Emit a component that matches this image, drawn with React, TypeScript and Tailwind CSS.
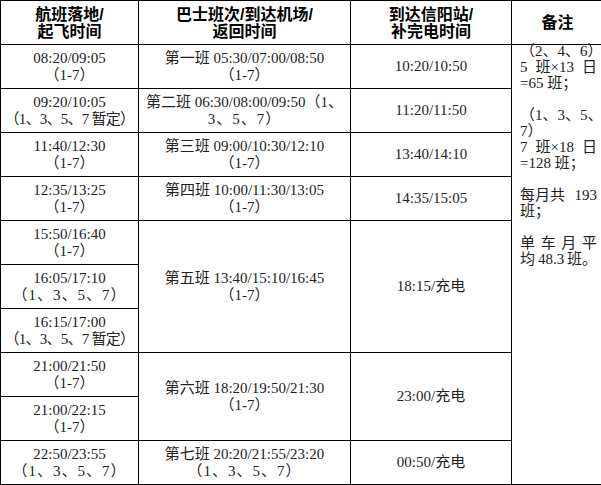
import React from 'react';

const flights = [
  { t: '08:20/09:05', d: '（1-7）' },
  { t: '09:20/10:05', d: '（1、3、5、7 暂定）', tight: 2 },
  { t: '11:40/12:30', d: '（1-7）' },
  { t: '12:35/13:25', d: '（1-7）' },
  { t: '15:50/16:40', d: '（1-7）' },
  { t: '16:05/17:10', d: '（1、3、5、7）', tight: 1 },
  { t: '16:15/17:00', d: '（1、3、5、7 暂定）', tight: 2 },
  { t: '21:00/21:50', d: '（1-7）' },
  { t: '21:00/22:15', d: '（1-7）' },
  { t: '22:50/23:55', d: '（1、3、5、7）', tight: 1 },
];

// bus column, with the row it starts on and how many rows it spans
const buses: Record<number, { span: number; a: string; b: string; c: string; wide?: boolean }> = {
  0: { span: 1, a: '第一班 05:30/07:00/08:50', b: '（1-7）', c: '10:20/10:50' },
  1: { span: 1, a: '第二班 06:30/08:00/09:50（1、', b: '3、5、7）', c: '11:20/11:50', wide: true },
  2: { span: 1, a: '第三班 09:00/10:30/12:10', b: '（1-7）', c: '13:40/14:10' },
  3: { span: 1, a: '第四班 10:00/11:30/13:05', b: '（1-7）', c: '14:35/15:05' },
  4: { span: 3, a: '第五班 13:40/15:10/16:45', b: '（1-7）', c: '18:15/充电' },
  7: { span: 2, a: '第六班 18:20/19:50/21:30', b: '（1-7）', c: '23:00/充电' },
  9: { span: 1, a: '第七班 20:20/21:55/23:20', b: '（1、3、5、7）', c: '00:50/充电', wide: true },
};

const Line = ({ parts }: { parts: string[] }) => (
  <div className="flex justify-between whitespace-nowrap">
    {parts.map((p, i) => (
      <span key={i}>{p}</span>
    ))}
  </div>
);

function Notes() {
  return (
    <div className="w-[77px] -mt-[2px] text-[15px] leading-[16px]">
      <Line parts={['（', '2', '、', '4', '、', '6', '）']} />
      <Line parts={['5', '班×13', '日']} />
      <div className="whitespace-nowrap">=65 班；</div>
      <div className="h-[16px]" />
      <Line parts={['（', '1', '、', '3', '、', '5', '、']} />
      <div>7）</div>
      <Line parts={['7', '班×18', '日']} />
      <div className="whitespace-nowrap">=128 班；</div>
      <div className="h-[16px]" />
      <Line parts={['每月共', '193']} />
      <div>班；</div>
      <div className="h-[16px]" />
      <Line parts={['单', '车', '月', '平']} />
      <Line parts={['均', '48.3', '班。']} />
    </div>
  );
}

export default function App() {
  const cell = 'border border-black text-center align-middle p-0';
  const head = 'border border-black text-center align-middle p-0 font-bold text-[16px] leading-[17px] text-black [font-family:"Liberation_Sans","Noto_Sans_CJK_SC",sans-serif]';
  return (
    <div className="w-[601px] h-[485px] overflow-hidden bg-white">
      <table className="border-collapse table-fixed w-[603px] text-[15px] leading-[17px] text-[#222] [font-family:'Liberation_Serif','Noto_Sans_CJK_SC',serif]">
        <colgroup>
          <col className="w-[138px]" />
          <col className="w-[212px]" />
          <col className="w-[161px]" />
          <col className="w-[92px]" />
        </colgroup>
        <thead>
          <tr className="h-[44px]">
            <th className={head}>航班落地/<br />起飞时间</th>
            <th className={head}>巴士班次/到达机场/<br />返回时间</th>
            <th className={head}>到达信阳站/<br />补完电时间</th>
            <th className={head}>备注</th>
          </tr>
        </thead>
        <tbody>
          {flights.map((f, i) => {
            const bus = buses[i];
            const dClass =
              f.tight === 2
                ? 'whitespace-nowrap tracking-[-0.75px]'
                : f.tight === 1
                  ? 'whitespace-nowrap tracking-[1px]'
                  : 'whitespace-nowrap';
            return (
              <tr key={i} className="h-[44px]">
                <td className={cell}>
                  <div className="whitespace-nowrap">{f.t}</div>
                  <div className={dClass}>{f.d}</div>
                </td>
                {bus && (
                  <td className={cell} rowSpan={bus.span}>
                    <div className="whitespace-nowrap">{bus.a}</div>
                    <div className={bus.wide ? 'whitespace-nowrap tracking-[1px]' : 'whitespace-nowrap'}>{bus.b}</div>
                  </td>
                )}
                {bus && (
                  <td className={cell} rowSpan={bus.span}>
                    <div className="whitespace-nowrap">{bus.c}</div>
                  </td>
                )}
                {i === 0 && (
                  <td className="border border-black align-top pl-[8px] pr-0 pt-0" rowSpan={10}>
                    <Notes />
                  </td>
                )}
              </tr>
            );
          })}
        </tbody>
      </table>
    </div>
  );
}
